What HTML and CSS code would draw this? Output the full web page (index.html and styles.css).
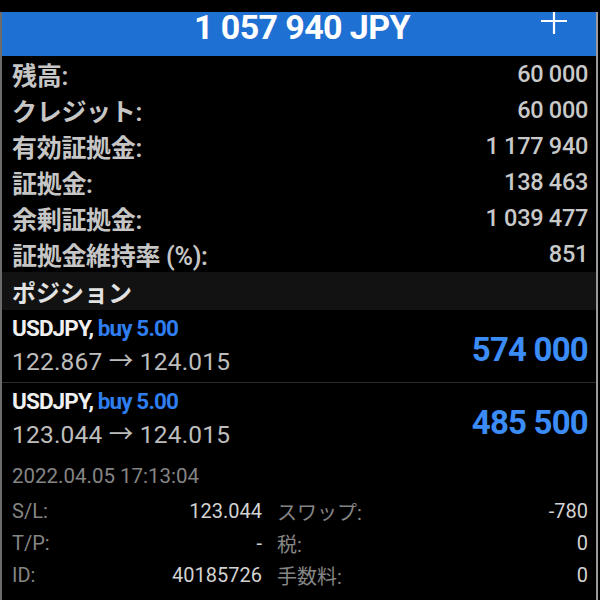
FILE: index.html
```html
<!DOCTYPE html>
<html lang="ja">
<head>
<meta charset="utf-8">
<link rel="stylesheet" href="styles.css">
</head>
<body>
<div class="topbar"></div>
<div class="screen">
  <div class="header">
    <span></span>
    <span class="balance">1 057 940 JPY</span>
    <svg class="plus" width="26" height="22" viewBox="0 0 26 22"><path d="M13 0V22M0 9H26" stroke="#fff" stroke-width="2.2" fill="none"/></svg>
  </div>
  <div class="summary">
    <div class="row"><span class="label">残高:</span><span class="value">60 000</span></div>
    <div class="row"><span class="label">クレジット:</span><span class="value">60 000</span></div>
    <div class="row"><span class="label">有効証拠金:</span><span class="value">1 177 940</span></div>
    <div class="row"><span class="label">証拠金:</span><span class="value">138 463</span></div>
    <div class="row"><span class="label">余剰証拠金:</span><span class="value">1 039 477</span></div>
    <div class="row"><span class="label">証拠金維持率 (%):</span><span class="value">851</span></div>
  </div>
  <div class="section">ポジション</div>
  <div class="position sep">
    <div class="pos-left">
      <div class="pos-title"><span class="sym">USDJPY,</span> <span class="side">buy 5.00</span></div>
      <div class="pos-prices">122.867 → 124.015</div>
    </div>
    <div class="profit">574 000</div>
  </div>
  <div class="position">
    <div class="pos-left">
      <div class="pos-title"><span class="sym">USDJPY,</span> <span class="side">buy 5.00</span></div>
      <div class="pos-prices">123.044 → 124.015</div>
    </div>
    <div class="profit">485 500</div>
  </div>
  <div class="date">2022.04.05 17:13:04</div>
  <div class="details">
    <div class="cell"><span class="dlabel">S/L:</span><span class="dvalue">123.044</span></div>
    <div class="cell"><span class="dlabel">スワップ:</span><span class="dvalue">-780</span></div>
    <div class="cell"><span class="dlabel">T/P:</span><span class="dvalue">-</span></div>
    <div class="cell"><span class="dlabel">税:</span><span class="dvalue">0</span></div>
    <div class="cell"><span class="dlabel">ID:</span><span class="dvalue">40185726</span></div>
    <div class="cell"><span class="dlabel">手数料:</span><span class="dvalue">0</span></div>
  </div>
</div>
</body>
</html>
```

FILE: styles.css
```css
html, body {
  margin: 0;
  padding: 0;
  background: #000;
}
body {
  width: 600px;
  height: 600px;
  overflow: hidden;
  font-family: Roboto, "Noto Sans CJK JP", sans-serif;
}
.topbar {
  height: 12px;
  background: #000;
}
.screen {
  width: 594px;
  height: 588px;
  border-left: 2px solid #6c6c6c;
  border-right: 2px solid #9a9a9a;
  background: #000;
}
.header {
  height: 44px;
  background: #1f70d3;
  display: grid;
  grid-template-columns: 1fr auto 1fr;
  align-items: start;
}
.balance {
  color: #fff;
  font-weight: 700;
  font-size: 34px;
  line-height: 30px;
  letter-spacing: -0.6px;
  margin-left: 6px;
}
.plus {
  justify-self: end;
  margin-right: 29px;
}
.summary {
  padding: 0 8px 0 10px;
}
.row {
  height: 36px;
  display: flex;
  justify-content: space-between;
  align-items: center;
}
.label {
  color: #c6c6c6;
  font-size: 25px;
  font-weight: 600;
  letter-spacing: -0.3px;
}
.value {
  color: #c9c9c9;
  font-size: 23.5px;
  font-weight: 500;
  letter-spacing: -0.3px;
}
.section {
  height: 38px;
  line-height: 40px;
  background: #121212;
  color: #e2e2e2;
  font-size: 24px;
  font-weight: 700;
  padding-left: 10px;
  font-family: "Noto Sans CJK JP", sans-serif;
}
.position {
  height: 72px;
  box-sizing: border-box;
  padding: 2px 8px 0 10px;
  display: flex;
  justify-content: space-between;
  align-items: center;
}
.position.sep {
  height: 73px;
  border-bottom: 1px solid #2b2b2b;
}
.pos-left {
  display: flex;
  flex-direction: column;
  align-self: flex-start;
}
.pos-title {
  height: 33px;
  line-height: 33px;
  font-size: 22.5px;
  font-weight: 700;
  letter-spacing: -0.9px;
}
.sym {
  color: #f0f0f0;
}
.side {
  color: #2f7ef0;
}
.pos-prices {
  height: 33px;
  line-height: 33px;
  font-size: 24.5px;
  color: #bdbdbd;
  letter-spacing: 0.2px;
}
.profit {
  color: #3b8cf6;
  font-size: 33px;
  font-weight: 700;
  letter-spacing: -0.8px;
  margin-top: 4px;
}
.date {
  height: 40px;
  line-height: 42px;
  padding-left: 10px;
  color: #858585;
  font-size: 20.5px;
}
.details {
  display: grid;
  grid-template-columns: 250px 1fr;
  column-gap: 15px;
  padding: 0 8px 0 10px;
}
.cell {
  height: 32px;
  display: flex;
  justify-content: space-between;
  align-items: center;
  font-size: 20px;
}
.dlabel {
  color: #858585;
}
.dvalue {
  color: #d2d2d2;
}
```
